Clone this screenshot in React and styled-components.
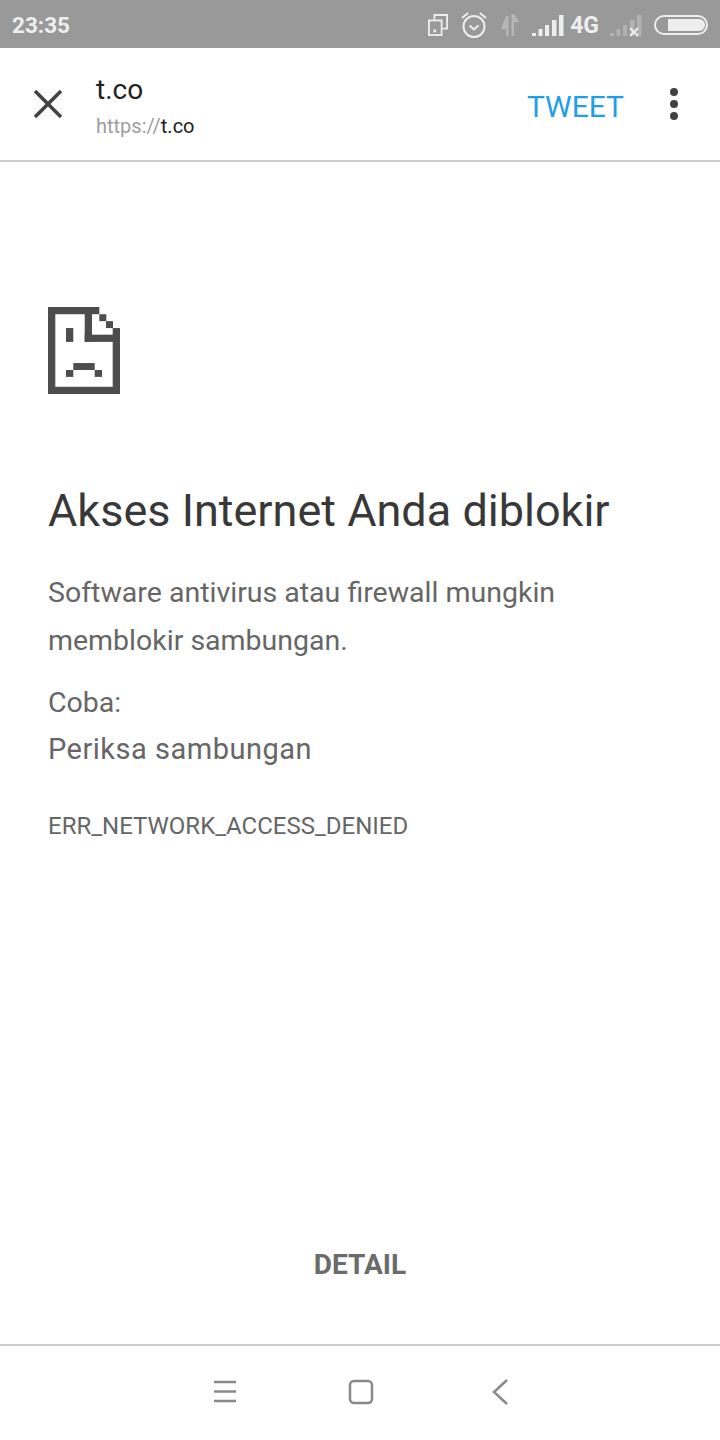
import React from 'react';
import styled, { createGlobalStyle } from 'styled-components';

const GlobalStyle = createGlobalStyle`
  html, body {
    margin: 0;
    padding: 0;
    background: #fff;
    font-family: Roboto, "Liberation Sans", sans-serif;
  }
`;

const Screen = styled.div`
  width: 720px;
  height: 1440px;
  display: flex;
  flex-direction: column;
  background: #fff;
  overflow: hidden;
`;

const StatusBar = styled.div`
  box-sizing: border-box;
  height: 48px;
  flex-shrink: 0;
  display: flex;
  align-items: center;
  justify-content: space-between;
  padding: 2px 12px 0;
  background: #999;
  color: #eee;
`;

const Clock = styled.span`
  font-size: 22.5px;
  font-weight: 700;
`;

const StatusIcons = styled.div`
  display: flex;
  align-items: center;
`;

const StatusIcon = styled.svg`
  display: block;
  flex-shrink: 0;
  margin-left: ${props => props.$gap}px;
`;

const NetworkLabel = styled.span`
  font-size: 23px;
  font-weight: 700;
  margin-left: 6px;
`;

const Toolbar = styled.header`
  height: 112px;
  flex-shrink: 0;
  display: flex;
  align-items: center;
  padding: 0 40px 0 32px;
  border-bottom: 2px solid #ccc;
`;

const CloseIcon = styled.svg`
  display: block;
  width: 32px;
  height: 32px;
`;

const UrlBlock = styled.div`
  flex: 1;
  margin-left: 32px;
  display: flex;
  flex-direction: column;
  gap: 4px;
  padding-top: 3px;
`;

const Host = styled.div`
  font-size: 28px;
  line-height: 36px;
  color: #212121;
`;

const FullUrl = styled.div`
  font-size: 20px;
  line-height: 28px;
  color: #9e9e9e;

  b {
    font-weight: 400;
    color: #212121;
  }
`;

const TweetAction = styled.span`
  font-size: 30px;
  padding-top: 5px;
  color: #1f9fe8;
  margin-right: 44px;
`;

const MoreIcon = styled.svg`
  display: block;
  width: 12px;
  height: 34px;
`;

const Main = styled.main`
  flex: 1;
  display: flex;
  flex-direction: column;
  padding: 145px 48px 0;
  color: #666;
`;

const SadPage = styled.svg`
  display: block;
  width: 72px;
  height: 87px;
  margin-bottom: 89px;
`;

const Heading = styled.h1`
  margin: 0 0 30px;
  font-size: 45px;
  line-height: 56px;
  font-weight: 400;
  color: #383838;
`;

const Paragraph = styled.p`
  margin: 0 0 15px;
  font-size: 28.5px;
  line-height: 48px;
`;

const TryLabel = styled.div`
  font-size: ${props => (props.$wide ? '29px' : '28.5px')};
  letter-spacing: ${props => (props.$wide ? '0.5px' : '0')};
  line-height: 46px;
`;

const ErrorCode = styled.div`
  margin-top: 38px;
  font-size: 24px;
  line-height: 32px;
`;

const DetailButton = styled.div`
  margin-top: auto;
  margin-bottom: 61px;
  text-align: center;
  font-size: 28px;
  line-height: 36px;
  font-weight: 700;
  color: #6b6b6b;
`;

const NavBar = styled.nav`
  height: 91px;
  flex-shrink: 0;
  display: flex;
  align-items: center;
  justify-content: center;
  gap: 100px;
  border-top: 2px solid #ccc;
  padding: 0 0 3px 2px;
`;

const NavIcon = styled.svg`
  display: block;
  width: 36px;
  height: 36px;
  fill: none;
  stroke: #8a8a8a;
  stroke-width: 2.5;
`;

const sadRects = [
  [0, 0, 51.3, 7.3],
  [0, 0, 7.3, 88],
  [0, 80.7, 72, 7.3],
  [64.7, 21.3, 7.3, 66.7],
  [36.7, 0, 7.3, 35],
  [36.7, 28, 35.3, 7.3],
  [51.3, 7.3, 7, 7],
  [58, 14.3, 7, 7],
  [18, 21.3, 7.3, 14],
  [25.3, 56.7, 21.4, 7],
  [18, 63.7, 7.3, 7],
  [46.7, 63.7, 7.3, 7],
];

const Signal = ({ opacity, cross }) => (
  <StatusIcon $gap={11} width="32" height="24" viewBox="0 0 32 24">
    <g fill="#eee" opacity={opacity}>
      <rect x="0" y="20" width="4" height="3" />
      <rect x="6.5" y="16" width="4" height="7" />
      <rect x="13" y="12" width="4" height="11" />
      <rect x="20" y="7" width="4.5" height="16" />
      <rect x="27" y="2" width="4.5" height="21" />
    </g>
    {cross && <path d="M20 15l8 8M28 15l-8 8" stroke="#eee" strokeWidth="2" />}
  </StatusIcon>
);

const App = () => {
  return (
    <Screen>
      <GlobalStyle />
      <StatusBar>
        <Clock>23:35</Clock>
        <StatusIcons>
          <StatusIcon $gap={0} width="20" height="22" viewBox="0 0 22 24" fill="none" stroke="#eee" strokeWidth="2">
            <rect x="1" y="7" width="14" height="16" />
            <path d="M7 6V1h14v15h-5" />
            <rect x="6" y="17" width="3" height="3" fill="#eee" stroke="none" />
          </StatusIcon>
          <StatusIcon $gap={13} width="26" height="26" viewBox="0 0 26 26" fill="none" stroke="#eee" strokeWidth="2">
            <circle cx="13" cy="14.5" r="10.500" />
            <path d="M8.500 13.500l4.500 4 4.500-4M1 6l6-5M25 6l-6-5" />
          </StatusIcon>
          <StatusIcon $gap={12} width="22" height="22" viewBox="0 0 22 22" fill="#eee" opacity="0.35">
            <path d="M7 2h2.500v20H7v-7H2zM12.500 0H15l5 8h-5v14h-2.500z" />
          </StatusIcon>
          <Signal opacity={1} />
          <NetworkLabel>4G</NetworkLabel>
          <Signal opacity={0.3} cross />
          <StatusIcon $gap={12} width="54" height="20" viewBox="0 0 54 20">
            <rect x="1" y="1" width="52" height="18" rx="9" fill="none" stroke="#eee" strokeWidth="2" />
            <path d="M14 4h31a6 6 0 0 1 0 12H14z" fill="#eee" />
          </StatusIcon>
        </StatusIcons>
      </StatusBar>

      <Toolbar>
        <CloseIcon viewBox="0 0 32 32" fill="none" stroke="#424242" strokeWidth="3.6">
          <path d="M3 3l26 26M29 3L3 29" />
        </CloseIcon>
        <UrlBlock>
          <Host>t.co</Host>
          <FullUrl>https://<b>t.co</b></FullUrl>
        </UrlBlock>
        <TweetAction>TWEET</TweetAction>
        <MoreIcon viewBox="0 0 12 34" fill="#424242">
          <circle cx="6" cy="5" r="4" />
          <circle cx="6" cy="17" r="4" />
          <circle cx="6" cy="29" r="4" />
        </MoreIcon>
      </Toolbar>

      <Main>
        <SadPage viewBox="0 0 72 88" preserveAspectRatio="none" fill="#4d4d4d">
          {sadRects.map(([x, y, w, h]) => (
            <rect key={`${x}-${y}`} x={x} y={y} width={w} height={h} />
          ))}
        </SadPage>
        <Heading>Akses Internet Anda diblokir</Heading>
        <Paragraph>Software antivirus atau firewall mungkin memblokir sambungan.</Paragraph>
        <TryLabel>Coba:</TryLabel>
        <TryLabel $wide>Periksa sambungan</TryLabel>
        <ErrorCode>ERR_NETWORK_ACCESS_DENIED</ErrorCode>
        <DetailButton>DETAIL</DetailButton>
      </Main>

      <NavBar>
        <NavIcon viewBox="0 0 36 36">
          <path d="M7 8h22M7 17.500h22M7 27h22" />
        </NavIcon>
        <NavIcon viewBox="0 0 36 36">
          <rect x="7" y="7" width="22" height="22" rx="4" />
        </NavIcon>
        <NavIcon viewBox="0 0 36 36">
          <path d="M28 6L15 18l13 12" />
        </NavIcon>
      </NavBar>
    </Screen>
  );
};

export default App;
